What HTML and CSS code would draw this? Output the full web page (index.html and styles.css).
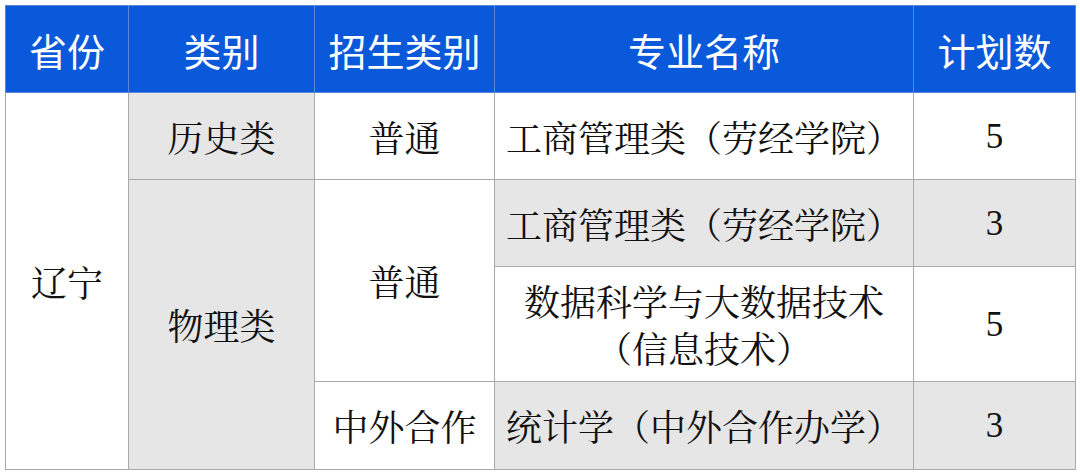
FILE: index.html
```html
<!DOCTYPE html>
<html lang="zh-CN">
<head>
<meta charset="utf-8">
<title>招生计划</title>
<link rel="stylesheet" href="styles.css">
</head>
<body>
<table class="plan">
  <colgroup>
    <col class="c-prov">
    <col class="c-type">
    <col class="c-adm">
    <col class="c-major">
    <col class="c-num">
  </colgroup>
  <thead>
    <tr class="r-head">
      <th>省份</th>
      <th>类别</th>
      <th>招生类别</th>
      <th>专业名称</th>
      <th>计划数</th>
    </tr>
  </thead>
  <tbody>
    <tr class="r-1">
      <td rowspan="4">辽宁</td>
      <td class="gray">历史类</td>
      <td>普通</td>
      <td>工商管理类（劳经学院）</td>
      <td class="num">5</td>
    </tr>
    <tr class="r-2">
      <td rowspan="3" class="gray">物理类</td>
      <td rowspan="2">普通</td>
      <td class="gray">工商管理类（劳经学院）</td>
      <td class="gray num">3</td>
    </tr>
    <tr class="r-3">
      <td class="two">数据科学与大数据技术<br>（信息技术）</td>
      <td class="num">5</td>
    </tr>
    <tr class="r-4">
      <td>中外合作</td>
      <td class="gray">统计学（中外合作办学）</td>
      <td class="gray num">3</td>
    </tr>
  </tbody>
</table>
</body>
</html>
```

FILE: styles.css
```css
html, body {
  margin: 0;
  padding: 0;
  background: #ffffff;
}

body {
  padding: 5px;
}

.plan {
  border-collapse: collapse;
  table-layout: fixed;
  width: 1070px;
  font-family: "Noto Serif CJK SC", "Liberation Serif", "Noto Sans CJK SC", serif;
  color: #111111;
}

.c-prov { width: 123px; }
.c-type { width: 186px; }
.c-adm { width: 180px; }
.c-major { width: 419px; }
.c-num { width: 162px; }

.plan th {
  background: #0b59db;
  color: #ffffff;
  font-family: "Noto Sans CJK SC", "Noto Sans", sans-serif;
  font-weight: 400;
  font-size: 38px;
  border: 1px solid #5d86d6;
  padding: 0;
  text-align: center;
  vertical-align: middle;
}

.plan td {
  border: 1px solid #a9a9a9;
  padding: 0 4px;
  font-size: 36px;
  text-align: center;
  vertical-align: middle;
  line-height: 47px;
  white-space: nowrap;
  background: #ffffff;
}

.plan td.gray {
  background: #e6e6e6;
}

.plan td.num {
  font-family: "Liberation Serif", serif;
  font-size: 35px;
}

.r-head { height: 87px; }
.r-1 { height: 87px; }
.r-2 { height: 87px; }
.r-3 { height: 115px; }
.r-4 { height: 88px; }
```
